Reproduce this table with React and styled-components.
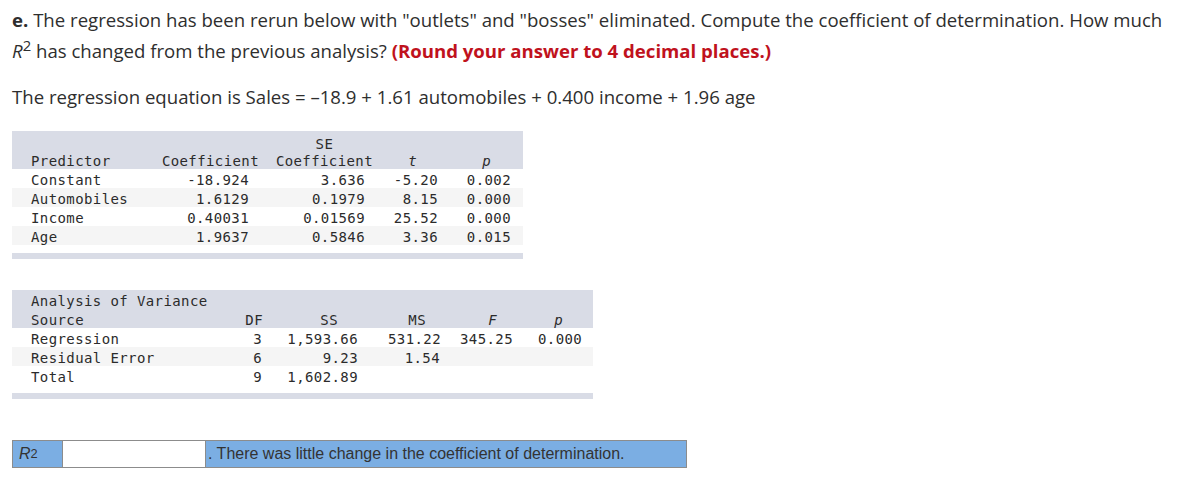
import React from "react";
import styled, { createGlobalStyle } from "styled-components";

const Global = createGlobalStyle`
  html, body { margin: 0; padding: 0; background: #fff; }
  body { font-family: "Open Sans", Lato, sans-serif; color: #2e2e2e; }
`;

const Page = styled.div`
  padding: 4px 12px 0 12px;
`;

const Question = styled.p`
  margin: 0;
  font-family: "Open Sans", Lato, sans-serif;
  font-size: 18.6px;
  line-height: 31px;
  color: #2e2e2e;
  white-space: nowrap;
`;

const Lead = styled.b`
  font-weight: 700;
`;

const Ital = styled.i`
  font-style: italic;
`;

const Sup = styled.sup`
  font-size: 0.8em;
  line-height: 0;
  vertical-align: 0.45em;
`;

const Red = styled.b`
  color: #c0121d;
  font-weight: 700;
`;

const Equation = styled.p`
  margin: 15px 0 0 0;
  font-family: "Open Sans", Lato, sans-serif;
  font-size: 18.6px;
  line-height: 31px;
  color: #2e2e2e;
`;

const Table = styled.div`
  width: ${(p) => p.$w}px;
  margin-top: ${(p) => p.$mt}px;
  font-family: "DejaVu Sans Mono", monospace;
  font-size: 14px;
  letter-spacing: 0.4px;
  color: #2b2b2b;
`;

const Row = styled.div`
  display: grid;
  grid-template-columns: ${(p) => p.$cols};
  height: ${(p) => p.$h || 19}px;
  align-items: end;
  background: ${(p) =>
    p.$kind === "head" ? "#d9dce6" : p.$kind === "stripe" ? "#f5f5f5" : "#ffffff"};
`;

const Cell = styled.div`
  padding-top: 4px;
  line-height: 15px;
  white-space: nowrap;
  text-align: ${(p) => p.$align || "right"};
  padding-left: ${(p) => p.$pl || 0}px;
  padding-right: ${(p) => p.$pr || 0}px;
  font-style: ${(p) => (p.$it ? "italic" : "normal")};
`;

const StackCell = styled(Cell)`
  padding-top: 6px;
`;

const Title = styled.div`
  grid-column: 1 / -1;
  padding-top: 4px;
  line-height: 15px;
  padding-left: 19px;
`;

const Stack = styled.span`
  display: inline-flex;
  flex-direction: column;
  align-items: center;
  gap: 2px;
`;

const Spacer = styled.div`
  height: 8px;
`;

const Bar = styled.div`
  height: 6px;
  background: #d9dce6;
`;

const Answer = styled.div`
  display: flex;
  width: 675px;
  height: 28px;
  margin-top: 41px;
  border: 1px solid #8c8c8c;
  font-family: "Liberation Sans", Arial, sans-serif;
  font-size: 16px;
  color: #333;
  box-sizing: border-box;
`;

const Label = styled.div`
  width: 50px;
  background: #7baee3;
  border-right: 1px solid #8c8c8c;
  padding-left: 6px;
  display: flex;
  align-items: center;
  box-sizing: border-box;
`;

const Input = styled.div`
  width: 143px;
  background: #fff;
  border-right: 1px solid #8c8c8c;
  box-sizing: border-box;
`;

const Note = styled.div`
  flex: 1;
  background: #7baee3;
  display: flex;
  align-items: center;
  padding-left: 2px;
`;

const t1cols = "145px 105px 114px 67px 80px";
const t1 = [
  ["Constant", "-18.924", "3.636", "-5.20", "0.002"],
  ["Automobiles", "1.6129", "0.1979", "8.15", "0.000"],
  ["Income", "0.40031", "0.01569", "25.52", "0.000"],
  ["Age", "1.9637", "0.5846", "3.36", "0.015"],
];
const t1vpr = [0, 13, 11, 5, 12];

const t2cols = "228px 30px 118px 58px 92px 55px";
const t2 = [
  ["Regression", "3", "1,593.66", "531.22", "345.25", "0.000"],
  ["Residual Error", "6", "9.23", "1.54", "", ""],
  ["Total", "9", "1,602.89", "", "", ""],
];
const t2vpr = [0, 8, 30, 6, 25, 15];

export default function App() {
  return (
    <Page>
      <Global />
      <Question>
        <Lead>e.</Lead> The regression has been rerun below with "outlets" and "bosses"
        eliminated. Compute the coefficient of determination. How much
        <br />
        <Ital>R</Ital>
        <Sup>2</Sup> has changed from the previous analysis?{" "}
        <Red>(Round your answer to 4 decimal places.)</Red>
      </Question>
      <Equation>
        The regression equation is Sales = –18.9 + 1.61 automobiles + 0.400 income + 1.96 age
      </Equation>

      <Table $w={511} $mt={19}>
        <Row $cols={t1cols} $kind="head" $h={38}>
          <Cell $align="left" $pl={19}>Predictor</Cell>
          <Cell $pr={3}>Coefficient</Cell>
          <StackCell $pr={3}>
            <Stack>
              <span>SE</span>
              <span>Coefficient</span>
            </Stack>
          </StackCell>
          <Cell $pr={26} $it>t</Cell>
          <Cell $pr={32} $it>p</Cell>
        </Row>
        {t1.map((r, i) => (
          <Row key={r[0]} $cols={t1cols} $kind={i % 2 ? "stripe" : "plain"}>
            {r.map((v, j) => (
              <Cell key={j} $align={j === 0 ? "left" : "right"} $pl={j === 0 ? 19 : 0} $pr={t1vpr[j]}>
                {v}
              </Cell>
            ))}
          </Row>
        ))}
        <Spacer />
        <Bar />
      </Table>

      <Table $w={581} $mt={31}>
        <Row $cols={t2cols} $kind="head">
          <Title>Analysis of Variance</Title>
        </Row>
        <Row $cols={t2cols} $kind="head">
          <Cell $align="left" $pl={19}>Source</Cell>
          <Cell $pr={7}>DF</Cell>
          <Cell $pr={50}>SS</Cell>
          <Cell $pr={20}>MS</Cell>
          <Cell $pr={41} $it>F</Cell>
          <Cell $pr={30} $it>p</Cell>
        </Row>
        {t2.map((r, i) => (
          <Row key={r[0]} $cols={t2cols} $kind={i % 2 ? "stripe" : "plain"}>
            {r.map((v, j) => (
              <Cell key={j} $align={j === 0 ? "left" : "right"} $pl={j === 0 ? 19 : 0} $pr={t2vpr[j]}>
                {v}
              </Cell>
            ))}
          </Row>
        ))}
        <Spacer />
        <Bar />
      </Table>

      <Answer>
        <Label>
          <Ital>R</Ital>
          <Sup>2</Sup>
        </Label>
        <Input />
        <Note>. There was little change in the coefficient of determination.</Note>
      </Answer>
    </Page>
  );
}
